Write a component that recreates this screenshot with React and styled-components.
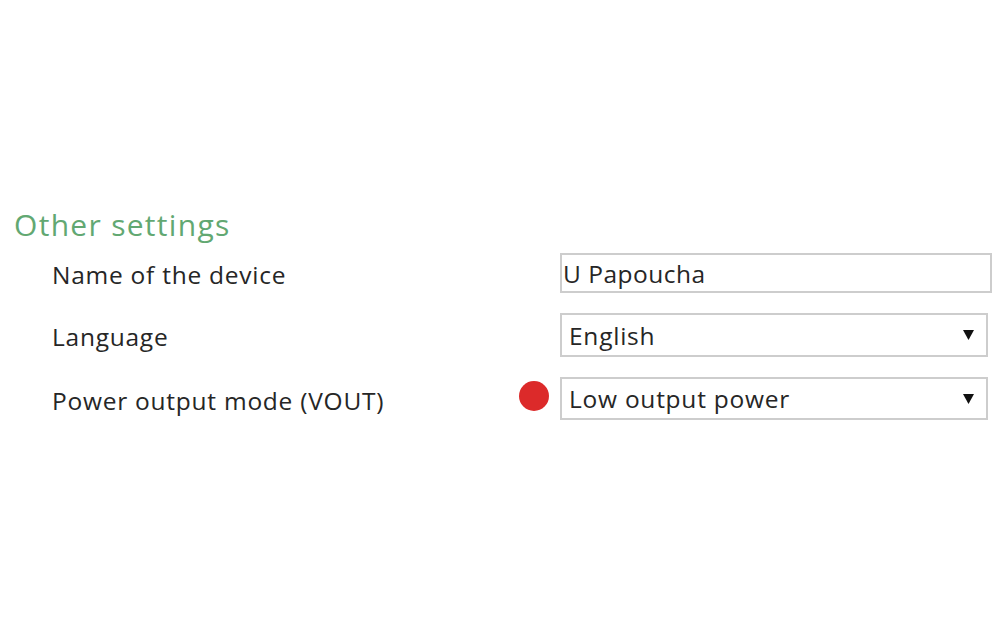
import React from "react";
import styled, { createGlobalStyle } from "styled-components";

const Global = createGlobalStyle`
  html, body { margin: 0; padding: 0; background: #fff; }
  body { font-family: "Open Sans", "Noto Sans", sans-serif; }
  * { box-sizing: border-box; }
`;

const Page = styled.div`
  width: 1000px;
  height: 640px;
  padding: 208px 0 0 14px;
  background: #fff;
`;

const Heading = styled.h2`
  margin: 0;
  font-size: 30px;
  line-height: 34px;
  font-weight: 400;
  letter-spacing: 1.3px;
  color: #62a872;
`;

const Rows = styled.div`
  display: flex;
  flex-direction: column;
  gap: 20px;
  margin-top: 11px;
  padding-left: 38px;
`;

const Row = styled.div`
  display: grid;
  grid-template-columns: 467px 41px auto;
  align-items: center;
`;

const Label = styled.div`
  font-size: 24.5px;
  letter-spacing: 0.75px;
  line-height: 30px;
  color: #262626;
  margin-top: ${(p) => p.$offset || 0}px;
`;

const Dot = styled.span`
  width: 30px;
  height: 30px;
  border-radius: 50%;
  background: #dc2a2a;
  margin-bottom: 6px;
`;

const TextBox = styled.input`
  width: 432px;
  height: 40px;
  border: 2px solid #cdcdcd;
  padding: 0 0 0 1px;
  font-family: "Open Sans", "Noto Sans", sans-serif;
  font-size: 24.5px;
  letter-spacing: 0.5px;
  color: #262626;
  background: #fff;
  outline: none;
`;

const Select = styled.div`
  width: 428px;
  height: ${(p) => p.$h || 44}px;
  border: 2px solid #cdcdcd;
  padding: 0 12px 0 7px;
  display: flex;
  align-items: center;
  justify-content: space-between;
  font-size: 24.5px;
  letter-spacing: 0.75px;
  color: #262626;
  background: #fff;
`;

const Arrow = () => (
  <svg width="11" height="10" viewBox="0 0 11 10" aria-hidden="true">
    <polygon points="0,0 11,0 5.5,10" fill="#111" />
  </svg>
);

export default function App() {
  return (
    <>
      <Global />
      <Page>
        <Heading>Other settings</Heading>
        <Rows>
          <Row>
            <Label $offset={3}>Name of the device</Label>
            <span />
            <TextBox defaultValue="U Papoucha" readOnly />
          </Row>
          <Row>
            <Label $offset={4}>Language</Label>
            <span />
            <Select role="combobox">
              English
              <Arrow />
            </Select>
          </Row>
          <Row>
            <Label $offset={4}>Power output mode (VOUT)</Label>
            <Dot />
            <Select role="combobox" $h={43}>
              Low output power
              <Arrow />
            </Select>
          </Row>
        </Rows>
      </Page>
    </>
  );
}
